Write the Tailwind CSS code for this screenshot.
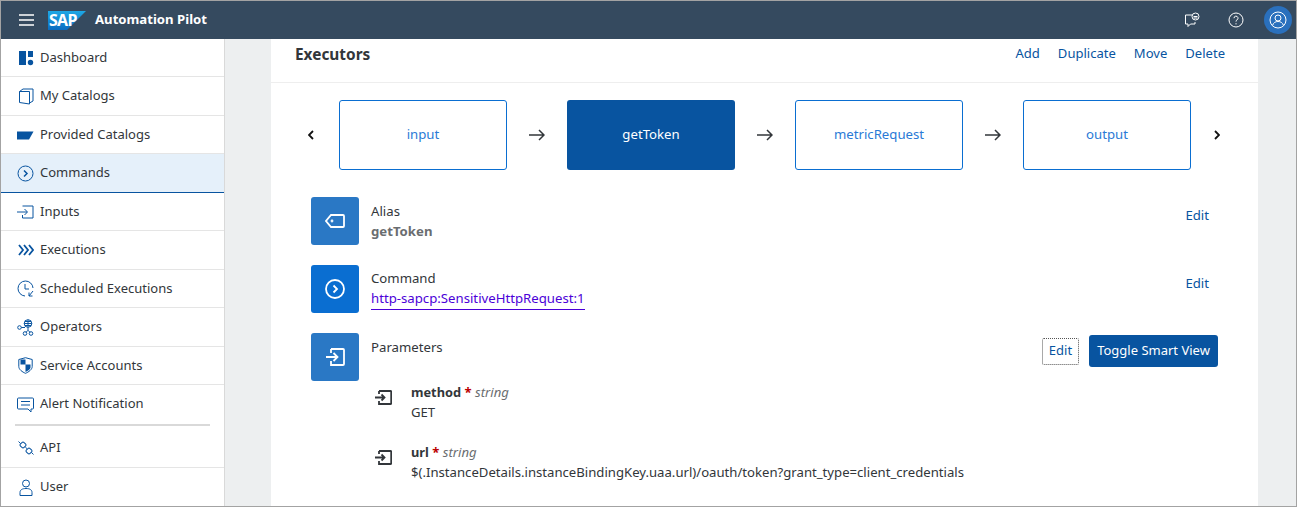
<!DOCTYPE html>
<html lang="en">
<head>
  <meta charset="UTF-8" />
  <title>Automation Pilot</title>
  <script src="https://cdn.jsdelivr.net/npm/@tailwindcss/browser@4"></script>
</head>
<body class="h-[507px] overflow-hidden bg-[#edeff0] font-['Noto_Sans',sans-serif] text-[13px] text-[#32363a]">
<div class="flex h-[507px] flex-col overflow-hidden border border-[#a3a3a3]">

  <!-- Header -->
  <header class="flex h-[38px] shrink-0 items-center bg-[#354a5f] text-white">
    <svg class="ml-[18px] h-[14px] w-[15px]" viewBox="0 0 15 14" fill="none" stroke="#fff" stroke-width="1.6"><path d="M0 2h15M0 7h15M0 12h15"/></svg>
    <div class="relative ml-[14px] h-[19px] w-[38px]">
      <svg class="absolute inset-0 h-[19px] w-[38px]" viewBox="0 0 38 19"><defs><linearGradient id="sap" x1="0" y1="0" x2="0" y2="1"><stop offset="0" stop-color="#1ea8e6"/><stop offset="1" stop-color="#0a6cc0"/></linearGradient></defs><path d="M0 0h38L19 19H0z" fill="url(#sap)"/></svg>
      <span class="absolute top-0 left-[1px] text-[16px] leading-[19px] font-bold tracking-[-0.7px] text-white">SAP</span>
    </div>
    <span class="-mt-[1px] ml-[9px] text-[13.15px] font-bold">Automation Pilot</span>
    <div class="ml-auto flex items-center">
      <svg class="h-[16px] w-[16px]" viewBox="0 0 16 16" fill="none" stroke="#fff" stroke-width="1"><path d="M8 3H1.500v9H4v2.500L6.500 12H11V10"/><circle cx="11.500" cy="4.500" r="3.500"/><path d="M9.500 4.500h4M9.500 6h4"/></svg>
      <svg class="ml-[28px] h-[16px] w-[16px]" viewBox="0 0 16 16" fill="none" stroke="#fff" stroke-width="1"><circle cx="8" cy="8" r="7"/><path d="M6 6.200a2 2 0 1 1 3 1.700c-.7.400-1 .800-1 1.700"/><path d="M8 11.200v1.200"/></svg>
      <div class="mr-[4px] ml-[20px] flex h-[28px] w-[28px] items-center justify-center rounded-full bg-[#2a70bd]">
        <svg class="h-[18px] w-[18px]" viewBox="0 0 18 18" fill="none" stroke="#fff" stroke-width="1"><circle cx="9" cy="9" r="8"/><circle cx="9" cy="7" r="3"/><path d="M3.500 14.500c1-3 3-4 5.500-4s4.500 1 5.500 4"/></svg>
      </div>
    </div>
  </header>

  <div class="flex min-h-0 flex-1">
    <!-- Sidebar -->
    <nav class="w-[224px] shrink-0 border-r border-[#d9d9d9] bg-white">
      <a class="flex h-[38px] items-center border-b border-[#e5e5e5]">
        <svg class="mr-[6px] ml-[17px] h-[16px] w-[16px]" viewBox="0 0 16 16" fill="#0854a0"><path d="M1 1h7v14H1zM10 1h5v6h-5z"/><circle cx="12.500" cy="12.500" r="2.700"/></svg>Dashboard</a>
      <a class="flex h-[39px] items-center border-b border-[#e5e5e5] pb-[1px]">
        <svg class="mt-[1px] mr-[6px] ml-[17px] h-[17px] w-[16px]" viewBox="0 0 16 17" fill="none" stroke="#0854a0"><path d="M1.500 3.500l10 0v12.500l-10-1.500zM1.500 3.500L5 1h10v12l-3.500 2"/></svg>My Catalogs</a>
      <a class="flex h-[38px] items-center border-b border-[#e5e5e5]">
        <svg class="mr-[6px] ml-[16px] h-[10px] w-[17px]" viewBox="0 0 17 10" fill="#0854a0"><path d="M0 1.500h16.500L12 9.500H0z"/></svg>Provided Catalogs</a>
      <a class="flex h-[39px] items-center border-b border-[#0854a0] bg-[#e5f0fa] pb-[1px]">
        <svg class="mt-[1px] mr-[6px] ml-[16px] h-[17px] w-[17px]" viewBox="0 0 17 17" fill="none" stroke="#0854a0"><circle cx="8.500" cy="8.500" r="7.500"/><path d="M7 5.500l3 3-3 3" stroke-width="1.500"/></svg>Commands</a>
      <a class="flex h-[38px] items-center border-b border-[#e5e5e5]">
        <svg class="mr-[6px] ml-[16px] h-[14px] w-[17px]" viewBox="0 0 17 14" fill="none" stroke="#0854a0"><path d="M5.500 1h10.500v12H5.500V10M0 7h10M7.500 4l3 3-3 3"/></svg>Inputs</a>
      <a class="flex h-[39px] items-center border-b border-[#e5e5e5] pb-[1px]">
        <svg class="mt-[1px] mr-[6px] ml-[17px] h-[12px] w-[16px]" viewBox="0 0 16 12" fill="none" stroke="#0854a0" stroke-width="1.800"><path d="M1 1l4 5-4 5M6 1l4 5-4 5M11 1l4 5-4 5"/></svg>Executions</a>
      <a class="flex h-[38px] items-center border-b border-[#e5e5e5]">
        <svg class="mr-[6px] ml-[16px] h-[17px] w-[17px]" viewBox="0 0 17 17" fill="none" stroke="#0854a0"><path d="M16 8A7.500 7.500 0 1 0 8 16M8 4v5h4M16 11l-4 5M12 12.500V16h3.500"/></svg>Scheduled Executions</a>
      <a class="flex h-[39px] items-center border-b border-[#e5e5e5] pb-[1px]">
        <svg class="mt-[1px] mr-[6px] ml-[16px] h-[17px] w-[17px]" viewBox="0 0 17 17" fill="none" stroke="#0854a0"><circle cx="11" cy="4.500" r="3.800"/><path d="M7.200 4.500h7.600M11 .7v7.600M8 2.500h6M8 6.500h6"/><circle cx="2.500" cy="8.500" r="1.800"/><circle cx="8" cy="14.500" r="1.800"/><circle cx="14" cy="14.500" r="1.800"/><path d="M4.300 8.500H8M11 8.300v3l-2 2M11 11.300l2 2"/></svg>Operators</a>
      <a class="flex h-[38px] items-center border-b border-[#e5e5e5]">
        <svg class="mr-[7px] ml-[17px] h-[17px] w-[15px]" viewBox="0 0 15 17"><path d="M.8 2.500L7.500.7l6.700 1.800v7c0 3-3.500 5.500-6.700 6.800C4.300 15 .8 12.500.8 9.500z" fill="none" stroke="#0854a0"/><path d="M7.500 2.500H2.500v5h5zM7.500 7.500h5v3c0 1.500-2.500 3.500-5 4.500z" fill="#0854a0"/></svg>Service Accounts</a>
      <a class="flex h-[39px] items-center pb-[2px]">
        <svg class="mt-[2px] mr-[6px] ml-[16px] h-[16px] w-[17px]" viewBox="0 0 17 16" fill="none" stroke="#0854a0"><path d="M1.500 1h14a1 1 0 0 1 1 1v9a1 1 0 0 1-1 1H14v3l-3-3H1.500a1 1 0 0 1-1-1V2a1 1 0 0 1 1-1zM4 4.500h9M4 8h9"/></svg>Alert Notification</a>
      <div class="mx-[14px] h-[2px] bg-[#d9d9d9]"></div>
      <a class="flex h-[42px] items-center border-b border-[#e5e5e5] pt-[2px]">
        <svg class="mr-[6px] ml-[17px] h-[14px] w-[16px]" viewBox="0 0 16 14" fill="none" stroke="#0854a0"><path d="M.5.500l2 2M15.500 13.500l-2-2M7.500 6.500l1.500 1"/><rect x="2.500" y="1.500" width="5" height="5" rx="1.500" transform="rotate(45 5 4)"/><rect x="8.500" y="7.500" width="5" height="5" rx="1.500" transform="rotate(45 11 10)"/></svg>API</a>
      <a class="flex h-[38px] items-center pb-[1px]">
        <svg class="mt-[1px] mr-[7px] ml-[18px] h-[17px] w-[14px]" viewBox="0 0 14 17" fill="none" stroke="#0854a0"><circle cx="7" cy="4.500" r="3.500"/><path d="M1 16.500v-3c0-2.500 2-4 6-4s6 1.500 6 4v3z"/></svg>User</a>
    </nav>

    <!-- Main -->
    <main class="ml-[46px] w-[987px] shrink-0 bg-white">
      <div class="flex h-[44px] items-center justify-between border-b border-[#eeeeee] pr-[33px] pl-[24px]">
        <h2 class="-mt-[12px] text-[15.4px] font-bold">Executors</h2>
        <div class="-mt-[13px] flex gap-[18px] text-[13.05px] text-[#0854a0]"><a>Add</a><a>Duplicate</a><a>Move</a><a>Delete</a></div>
      </div>

      <!-- Flow -->
      <div class="mt-[17px] flex h-[70px] items-center text-[13.2px]">
        <svg class="ml-[37px] h-[10px] w-[6px]" viewBox="0 0 6 10" fill="none" stroke="#111" stroke-width="1.800"><path d="M5 1L1 5l4 4"/></svg>
        <div class="ml-[25px] flex h-[70px] w-[168px] items-center justify-center rounded-[3px] border border-[#0a6ed1] text-[#2a7ad6]">input</div>
        <svg class="mx-[22px] h-[12px] w-[16px]" viewBox="0 0 16 12" fill="none" stroke="#32363a" stroke-width="1.500"><path d="M0 6h15M10 1l5 5-5 5"/></svg>
        <div class="flex h-[70px] w-[168px] items-center justify-center rounded-[3px] bg-[#0854a0] text-white">getToken</div>
        <svg class="mx-[22px] h-[12px] w-[16px]" viewBox="0 0 16 12" fill="none" stroke="#32363a" stroke-width="1.500"><path d="M0 6h15M10 1l5 5-5 5"/></svg>
        <div class="flex h-[70px] w-[168px] items-center justify-center rounded-[3px] border border-[#0a6ed1] text-[#2a7ad6]">metricRequest</div>
        <svg class="mx-[22px] h-[12px] w-[16px]" viewBox="0 0 16 12" fill="none" stroke="#32363a" stroke-width="1.500"><path d="M0 6h15M10 1l5 5-5 5"/></svg>
        <div class="flex h-[70px] w-[168px] items-center justify-center rounded-[3px] border border-[#0a6ed1] text-[#2a7ad6]">output</div>
        <svg class="ml-[23px] h-[10px] w-[6px]" viewBox="0 0 6 10" fill="none" stroke="#111" stroke-width="1.800"><path d="M1 1l4 4-4 4"/></svg>
      </div>

      <!-- Alias -->
      <div class="mt-[27px] ml-[40px] flex h-[48px] gap-[12px] text-[13.2px]">
        <div class="flex h-[48px] w-[48px] items-center justify-center rounded-[3px] bg-[#2a78c5]">
          <svg class="h-[16px] w-[20px]" viewBox="0 0 20 16" fill="none" stroke="#fff" stroke-width="1.800"><path d="M6 2h12a1 1 0 0 1 1 1v10a1 1 0 0 1-1 1H6L1 8z"/><circle cx="7" cy="8" r=".5"/></svg>
        </div>
        <div class="flex-1 pt-[4px] leading-[20px]"><div>Alias</div><div class="font-bold text-[#6a6d70]">getToken</div></div>
        <a class="mt-[9px] mr-[49px] text-[#0854a0]">Edit</a>
      </div>

      <!-- Command -->
      <div class="mt-[20px] ml-[40px] flex h-[48px] gap-[12px] text-[13.2px]">
        <div class="flex h-[48px] w-[48px] items-center justify-center rounded-[3px] bg-[#0a6ed1]">
          <svg class="h-[20px] w-[20px]" viewBox="0 0 20 20" fill="none" stroke="#fff" stroke-width="1.800"><circle cx="10" cy="10" r="9"/><path d="M8.500 6.500l3.500 3.500-3.500 3.500"/></svg>
        </div>
        <div class="flex-1 pt-[3px] leading-[20px]"><div>Command</div><a class="inline-block border-b border-[#4b00d8] pb-[1px] text-[#4b00d8]">http-sapcp:SensitiveHttpRequest:1</a></div>
        <a class="mt-[9px] mr-[49px] text-[#0854a0]">Edit</a>
      </div>

      <!-- Parameters -->
      <div class="mt-[20px] ml-[40px] flex h-[48px] gap-[12px] text-[13.2px]">
        <div class="flex h-[48px] w-[48px] items-center justify-center rounded-[3px] bg-[#2a78c5]">
          <svg class="h-[18px] w-[20px]" viewBox="0 0 20 18" fill="none" stroke="#fff" stroke-width="1.800"><path d="M6 1h12a1 1 0 0 1 1 1v14a1 1 0 0 1-1 1H6V13M6 5V1M1 9h11M8.500 5l4 4-4 4"/></svg>
        </div>
        <div class="flex-1 pt-[4px] leading-[20px]">Parameters</div>
        <div class="mt-[2px] mr-[40px] flex h-[32px] items-center gap-[10px] text-[13px]">
          <a class="flex h-[27px] w-[37px] items-center justify-center rounded-[2px] border border-dotted border-[#555] text-[#0854a0]">Edit</a>
          <a class="flex h-[32px] w-[129px] items-center justify-center rounded-[3px] bg-[#0854a0] text-white">Toggle Smart View</a>
        </div>
      </div>

      <!-- Parameter list -->
      <div class="mt-[1px] ml-[104px] flex gap-[19px] text-[13.15px]">
        <svg class="mt-[8px] h-[15px] w-[17px] shrink-0" viewBox="0 0 17 15" fill="none" stroke="#32363a" stroke-width="1.800"><path d="M4 1h11.500a.700.700 0 0 1 .700.700v11.600a.700.700 0 0 1-.700.700H4V11M4 4V1M0 7.500h9.500M6.500 4.500l3 3-3 3"/></svg>
        <div class="leading-[20px]"><div><b class="text-[12.8px] font-bold">method</b> <b class="text-[#bb0000]">*</b> <i class="text-[#6a6d70]">string</i></div><div>GET</div></div>
      </div>
      <div class="mt-[20px] ml-[104px] flex gap-[19px] text-[13.15px]">
        <svg class="mt-[8px] h-[15px] w-[17px] shrink-0" viewBox="0 0 17 15" fill="none" stroke="#32363a" stroke-width="1.800"><path d="M4 1h11.500a.700.700 0 0 1 .700.700v11.600a.700.700 0 0 1-.700.700H4V11M4 4V1M0 7.500h9.500M6.500 4.500l3 3-3 3"/></svg>
        <div class="leading-[20px]"><div><b class="text-[12.8px] font-bold">url</b> <b class="text-[#bb0000]">*</b> <i class="text-[#6a6d70]">string</i></div><div>$(.InstanceDetails.instanceBindingKey.uaa.url)/oauth/token?grant_type=client_credentials</div></div>
      </div>
    </main>
  </div>
</div>
</body>
</html>
